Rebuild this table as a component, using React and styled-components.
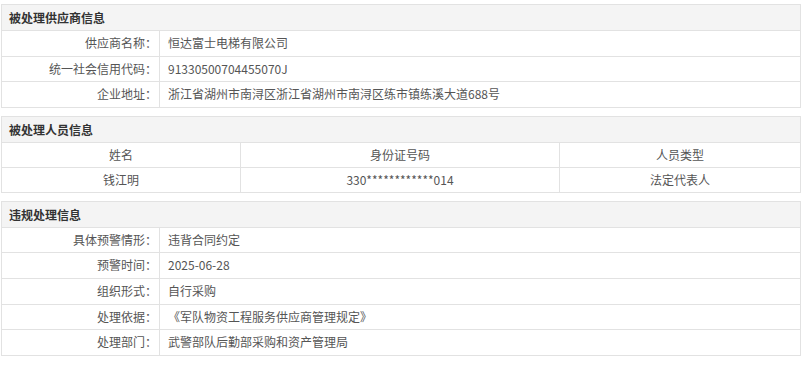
import React from "react";
import styled, { createGlobalStyle } from "styled-components";

const GlobalStyle = createGlobalStyle`
  html, body {
    margin: 0;
    padding: 0;
    background: #fff;
  }
  body {
    font-family: "Microsoft YaHei", "Noto Sans CJK SC", "Liberation Sans", sans-serif;
    font-size: 12px;
    color: #555;
  }
`;

const Page = styled.div`
  display: flex;
  flex-direction: column;
  gap: 8px;
  padding: 4px 5px 0 1px;
`;

const Section = styled.div`
  border: 1px solid #e2e2e2;
  border-bottom: none;
`;

const SectionHeader = styled.div`
  height: 25px;
  line-height: 25px;
  padding-left: 7px;
  background: #f4f4f4;
  border-bottom: 1px solid #e2e2e2;
  font-weight: bold;
  color: #333;
`;

const InfoRow = styled.div`
  display: grid;
  grid-template-columns: 158px 1fr;
  height: 24.6px;
  border-bottom: 1px solid #e2e2e2;
`;

const Label = styled.div`
  text-align: right;
  line-height: 24px;
  padding-right: 2px;
  border-right: 1px solid #e2e2e2;
`;

const Value = styled.div`
  line-height: 24px;
  padding-left: 8px;
  white-space: nowrap;
`;

const TableRow = styled.div`
  display: grid;
  grid-template-columns: 239px 319px 1fr;
  height: 24px;
  border-bottom: 1px solid #e2e2e2;
`;

const Cell = styled.div`
  text-align: center;
  line-height: 24px;
  border-right: ${(p) => (p.$last ? "none" : "1px solid #e2e2e2")};
`;

const supplier = [
  ["供应商名称：", "恒达富士电梯有限公司"],
  ["统一社会信用代码：", "91330500704455070J"],
  ["企业地址：", "浙江省湖州市南浔区浙江省湖州市南浔区练市镇练溪大道688号"],
];

const violation = [
  ["具体预警情形：", "违背合同约定"],
  ["预警时间：", "2025-06-28"],
  ["组织形式：", "自行采购"],
  ["处理依据：", "《军队物资工程服务供应商管理规定》"],
  ["处理部门：", "武警部队后勤部采购和资产管理局"],
];

const people = [
  ["姓名", "身份证号码", "人员类型"],
  ["钱江明", "330************014", "法定代表人"],
];

const InfoSection = ({ title, rows }) => (
  <Section>
    <SectionHeader>{title}</SectionHeader>
    {rows.map(([label, value]) => (
      <InfoRow key={label}>
        <Label>{label}</Label>
        <Value>{value}</Value>
      </InfoRow>
    ))}
  </Section>
);

export default function App() {
  return (
    <>
      <GlobalStyle />
      <Page>
        <InfoSection title="被处理供应商信息" rows={supplier} />
        <Section>
          <SectionHeader>被处理人员信息</SectionHeader>
          {people.map((row, i) => (
            <TableRow key={i}>
              {row.map((cell, j) => (
                <Cell key={j} $last={j === row.length - 1}>
                  {cell}
                </Cell>
              ))}
            </TableRow>
          ))}
        </Section>
        <InfoSection title="违规处理信息" rows={violation} />
      </Page>
    </>
  );
}
